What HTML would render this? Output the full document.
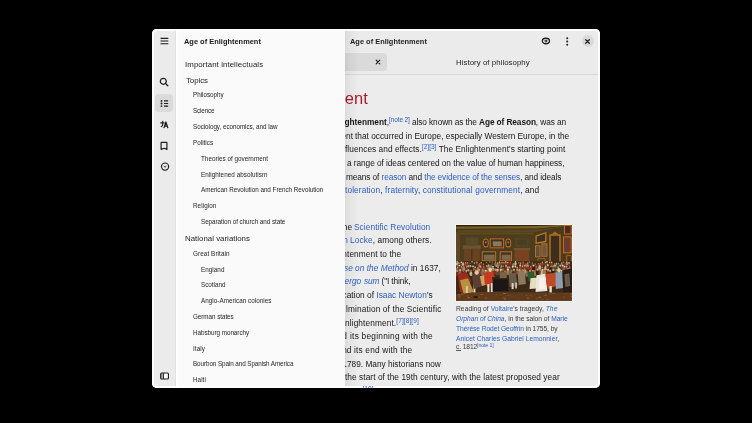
<!DOCTYPE html>
<html><head><meta charset="utf-8"><style>
html,body{margin:0;padding:0;background:#000;width:752px;height:423px;overflow:hidden}
.clip{position:absolute;left:152px;top:29px;width:448px;height:359px;border-radius:5px;overflow:hidden}
.inner{position:absolute;left:-152px;top:-29px;width:752px;height:423px}
.t{position:absolute;white-space:nowrap;line-height:1;font-family:"Liberation Sans", sans-serif;will-change:transform}
.t sup{font-size:0.78em;vertical-align:0;position:relative;top:-0.42em;color:#2d5dbd}
.t a{color:#2d5dbd;text-decoration:none}
.r{position:absolute}
.edge{position:absolute;left:152px;top:29px;width:448px;height:359px;border-radius:5px;box-shadow:inset 0 0 0 2px rgba(255,255,255,0.9);pointer-events:none}
</style></head><body>
<div class="clip"><div class="inner">
<div class="r" style="left:152px;top:29px;width:448px;height:359px;background:#ececec;"></div>
<div class="r" style="left:152px;top:29px;width:448px;height:45px;background:#ebebeb;"></div>
<div class="r" style="left:152px;top:74px;width:448px;height:1px;background:#dadada;"></div>
<div class="t" id="hdr" style="left:349.96px;top:37.84px;font-size:7.400px;color:#1e1e1e;font-weight:bold;letter-spacing:0.025px;">Age of Enlightenment</div>
<div class="r" style="left:300px;top:53.3px;width:87px;height:17.4px;background:#dadada;border-radius:3.5px;"></div>
<svg class="r" style="left:375px;top:59px" width="6" height="6" viewBox="0 0 6 6"><path d="M1.2 1.2L4.8 4.8M4.8 1.2L1.2 4.8" stroke="#1e1e1e" stroke-width="1.2" stroke-linecap="round"/></svg>
<div class="t" id="tab2" style="left:455.94px;top:59.40px;font-size:7.800px;color:#242424;font-weight:normal;letter-spacing:0.065px;">History of philosophy</div>
<svg class="r" style="left:541px;top:37px" width="10" height="8" viewBox="0 0 10 8"><ellipse cx="4.9" cy="4" rx="3.55" ry="2.75" fill="none" stroke="#1e1e1e" stroke-width="1.35"/><circle cx="4.9" cy="4.1" r="1.45" fill="#1e1e1e"/><circle cx="4.75" cy="3.95" r="0.55" fill="#f0f0f0"/></svg>
<svg class="r" style="left:564.5px;top:35.5px" width="4" height="11" viewBox="0 0 4 11"><circle cx="2.2" cy="2.3" r="1" fill="#1e1e1e"/><circle cx="2.2" cy="5.5" r="1" fill="#1e1e1e"/><circle cx="2.2" cy="8.7" r="1" fill="#1e1e1e"/></svg>
<div class="r" style="left:581.5px;top:35px;width:12px;height:12px;background:#d9d9d9;border-radius:50%;"></div>
<svg class="r" style="left:585px;top:38.5px" width="5" height="5" viewBox="0 0 5 5"><path d="M0.7 0.7L4.3 4.3M4.3 0.7L0.7 4.3" stroke="#1e1e1e" stroke-width="1.25" stroke-linecap="round"/></svg>
<div class="t" id="h1" style="right:384.70px;top:89.63px;font-size:16.500px;color:#a51d2a;font-weight:normal;letter-spacing:0px;">Age of Enlightenment</div>
<div class="t" id="a1" style="left:389.00px;top:117.97px;font-size:8.300px;color:#161616;font-weight:normal;letter-spacing:-0.096px;"><sup>[note 2]</sup> also known as the <b>Age of Reason</b>, was an</div>
<div class="t" id="a1p" style="right:363.00px;top:117.97px;font-size:8.300px;color:#161616;font-weight:normal;letter-spacing:0px;"><b>The&nbsp;Age&nbsp;of&nbsp;Enlightenment</b>,</div>
<div class="t" id="a2" style="left:355.00px;top:131.67px;font-size:8.300px;color:#161616;font-weight:normal;letter-spacing:-0.002px;">that occurred in Europe, especially Western Europe, in the</div>
<div class="t" id="a2p" style="right:397.00px;top:131.67px;font-size:8.300px;color:#161616;font-weight:normal;letter-spacing:0px;">philosophical&nbsp;movement&nbsp;</div>
<div class="t" id="a3" style="left:345.00px;top:145.37px;font-size:8.300px;color:#161616;font-weight:normal;letter-spacing:0.041px;">fluences and effects.<sup>[2][3]</sup> The Enlightenment's starting point</div>
<div class="t" id="a3p" style="right:407.00px;top:145.37px;font-size:8.300px;color:#161616;font-weight:normal;letter-spacing:0px;">global&nbsp;in</div>
<div class="t" id="a4" style="left:346.50px;top:159.07px;font-size:8.300px;color:#161616;font-weight:normal;letter-spacing:-0.061px;">a range of ideas centered on the value of human happiness,</div>
<div class="t" id="a4p" style="right:405.50px;top:159.07px;font-size:8.300px;color:#161616;font-weight:normal;letter-spacing:0px;">The&nbsp;Enlightenment&nbsp;included&nbsp;</div>
<div class="t" id="a5" style="left:346.00px;top:172.77px;font-size:8.300px;color:#161616;font-weight:normal;letter-spacing:-0.105px;">means of <a>reason</a> and <a>the evidence of the senses</a>, and ideals</div>
<div class="t" id="a5p" style="right:406.00px;top:172.77px;font-size:8.300px;color:#161616;font-weight:normal;letter-spacing:0px;">knowledge&nbsp;obtained&nbsp;by&nbsp;</div>
<div class="t" id="a6" style="left:345.00px;top:186.47px;font-size:8.300px;color:#161616;font-weight:normal;letter-spacing:0.113px;"><a>toleration</a>, <a>fraternity</a>, <a>constitutional government</a>, and</div>
<div class="t" id="a6p" style="right:407.00px;top:186.47px;font-size:8.300px;color:#161616;font-weight:normal;letter-spacing:0px;">liberty,&nbsp;progress,&nbsp;</div>
<div class="t" id="b1" style="left:354.00px;top:222.67px;font-size:8.300px;color:#161616;font-weight:normal;letter-spacing:0.075px;"><a>Scientific Revolution</a></div>
<div class="t" id="b1p" style="right:398.00px;top:222.67px;font-size:8.300px;color:#161616;font-weight:normal;letter-spacing:0px;">ideas&nbsp;during&nbsp;the&nbsp;</div>
<div class="t" id="b2" style="left:349.96px;top:236.37px;font-size:8.300px;color:#161616;font-weight:normal;letter-spacing:0.098px;"><a>Locke</a>, among others.</div>
<div class="t" id="b2p" style="right:402.04px;top:236.37px;font-size:8.300px;color:#161616;font-weight:normal;letter-spacing:0px;">such&nbsp;as&nbsp;<a>John&nbsp;</a></div>
<div class="t" id="b3" style="left:347.00px;top:250.07px;font-size:8.300px;color:#161616;font-weight:normal;letter-spacing:0.082px;">tenment to the</div>
<div class="t" id="b3p" style="right:405.00px;top:250.07px;font-size:8.300px;color:#161616;font-weight:normal;letter-spacing:0px;">the&nbsp;Enligh</div>
<div class="t" id="b4" style="left:355.00px;top:263.77px;font-size:8.300px;color:#161616;font-weight:normal;letter-spacing:0.043px;"><a><i>on the Method</i></a> in 1637,</div>
<div class="t" id="b4p" style="right:397.00px;top:263.77px;font-size:8.300px;color:#161616;font-weight:normal;letter-spacing:0px;"><a><i>Discourse&nbsp;</i></a></div>
<div class="t" id="b5" style="left:363.96px;top:277.47px;font-size:8.300px;color:#161616;font-weight:normal;letter-spacing:-0.125px;"><a><i>sum</i></a> ("I think,</div>
<div class="t" id="b5p" style="right:388.04px;top:277.47px;font-size:8.300px;color:#161616;font-weight:normal;letter-spacing:0px;"><a><i>Cogito,&nbsp;ergo&nbsp;</i></a></div>
<div class="t" id="b6" style="left:367.00px;top:291.17px;font-size:8.300px;color:#161616;font-weight:normal;letter-spacing:0.027px;">of <a>Isaac Newton</a>'s</div>
<div class="t" id="b6p" style="right:385.00px;top:291.17px;font-size:8.300px;color:#161616;font-weight:normal;letter-spacing:0px;">publication&nbsp;</div>
<div class="t" id="b7" style="left:346.00px;top:304.87px;font-size:8.300px;color:#161616;font-weight:normal;letter-spacing:0.135px;">lmination of the Scientific</div>
<div class="t" id="b7p" style="right:406.00px;top:304.87px;font-size:8.300px;color:#161616;font-weight:normal;letter-spacing:0px;">as&nbsp;the&nbsp;cu</div>
<div class="t" id="b8" style="left:345.00px;top:318.57px;font-size:8.300px;color:#161616;font-weight:normal;letter-spacing:0.111px;">nlightenment.<sup>[7][8][9]</sup></div>
<div class="t" id="b8p" style="right:407.00px;top:318.57px;font-size:8.300px;color:#161616;font-weight:normal;letter-spacing:0px;">the&nbsp;E</div>
<div class="t" id="b9" style="left:349.50px;top:332.27px;font-size:8.300px;color:#161616;font-weight:normal;letter-spacing:0.25px;">its beginning with the</div>
<div class="t" id="b9p" style="right:402.50px;top:332.27px;font-size:8.300px;color:#161616;font-weight:normal;letter-spacing:0px;">usually&nbsp;dated&nbsp;</div>
<div class="t" id="b10" style="left:353.96px;top:345.97px;font-size:8.300px;color:#161616;font-weight:normal;letter-spacing:0.185px;">its end with the</div>
<div class="t" id="b10p" style="right:398.04px;top:345.97px;font-size:8.300px;color:#161616;font-weight:normal;letter-spacing:0px;">in&nbsp;1715&nbsp;and&nbsp;</div>
<div class="t" id="b11" style="left:346.50px;top:359.67px;font-size:8.300px;color:#161616;font-weight:normal;letter-spacing:-0.011px;">789. Many historians now</div>
<div class="t" id="b11p" style="right:405.50px;top:359.67px;font-size:8.300px;color:#161616;font-weight:normal;letter-spacing:0px;">Revolution&nbsp;in&nbsp;1</div>
<div class="t" id="b12" style="left:345.00px;top:373.37px;font-size:8.300px;color:#161616;font-weight:normal;letter-spacing:0.061px;">the start of the 19th century, with the latest proposed year</div>
<div class="t" id="b12p" style="right:407.00px;top:373.37px;font-size:8.300px;color:#161616;font-weight:normal;letter-spacing:0px;">Enlightenment&nbsp;as&nbsp;</div>
<svg class="r" style="left:455px;top:223.5px" width="118" height="78" viewBox="-1 -1 118 78"><rect x="-1" y="-1" width="118" height="78" fill="#f5f5f5"/><defs><linearGradient id="pg" x1="0" y1="0" x2="0" y2="1"><stop offset="0" stop-color="#3a2a10"/><stop offset="0.13" stop-color="#5a4820"/><stop offset="0.5" stop-color="#5a4a26"/><stop offset="0.55" stop-color="#4a3418"/><stop offset="1" stop-color="#5a3a1c"/></linearGradient><filter id="bl"><feGaussianBlur stdDeviation="0.3"/></filter><clipPath id="pc"><rect x="0" y="0" width="116" height="76"/></clipPath></defs><g clip-path="url(#pc)"><g filter="url(#bl)"><rect x="-0.02" y="-0.52" width="116.10" height="76.34" fill="url(#pg)" /><rect x="-0.02" y="-0.52" width="116.10" height="3.98" fill="#2e220e" /><polygon points="-0.02,1.46 79.50,1.07 116.08,-0.52 116.08,0.67 81.49,3.45 -0.02,3.85" fill="#7a6028" /><polygon points="1.96,5.04 77.51,4.65 107.33,1.46 107.33,2.66 79.50,7.03 1.96,7.43" fill="#5a4620" /><rect x="3.95" y="7.83" width="71.57" height="1.59" fill="#5e4a24" /><polygon points="75.52,9.42 116.08,3.45 116.08,5.44 77.51,11.40" fill="#6a5024" /><rect x="3.95" y="9.42" width="73.56" height="29.82" fill="#4e3e1e" /><rect x="7.93" y="23.33" width="15.90" height="15.90" fill="#6a4220" /><rect x="15.48" y="23.33" width="0.80" height="15.90" fill="#3a2a14" /><rect x="6.93" y="20.35" width="17.89" height="3.38" fill="#6a5630" /><rect x="9.92" y="12.40" width="11.93" height="7.95" fill="#584a2c" /><ellipse cx="29.80" cy="17.97" rx="2.98" ry="4.57" fill="#c07028" /><ellipse cx="29.80" cy="17.97" rx="1.99" ry="3.38" fill="#3a2a1c" /><ellipse cx="29.80" cy="17.37" rx="0.80" ry="1.19" fill="#a08060" /><rect x="33.77" y="13.39" width="14.31" height="9.94" fill="#c46a28" /><rect x="34.77" y="14.39" width="12.33" height="7.95" fill="#3a3020" /><rect x="36.76" y="16.37" width="8.95" height="4.97" fill="#8a7a5a" /><ellipse cx="52.26" cy="17.97" rx="2.98" ry="4.57" fill="#c07028" /><ellipse cx="52.26" cy="17.97" rx="1.99" ry="3.38" fill="#3a2a1c" /><ellipse cx="52.26" cy="17.37" rx="0.80" ry="1.19" fill="#a08060" /><rect x="59.62" y="13.39" width="12.92" height="7.95" fill="#5a4a2a" /><rect x="60.61" y="14.39" width="10.93" height="5.96" fill="#4a3c24" /><rect x="25.82" y="26.32" width="14.31" height="9.94" fill="#c46a28" /><rect x="26.82" y="27.31" width="12.33" height="7.95" fill="#3a3424" /><rect x="27.81" y="29.69" width="10.93" height="5.17" fill="#7a6a48" /><rect x="43.71" y="26.32" width="12.33" height="9.94" fill="#c46a28" /><rect x="44.71" y="27.31" width="10.34" height="7.95" fill="#3a3424" /><rect x="45.70" y="29.69" width="8.95" height="5.17" fill="#7a6a48" /><rect x="58.62" y="24.33" width="14.51" height="14.91" fill="#7a4222" /><rect x="57.63" y="22.94" width="16.30" height="2.39" fill="#6a5430" /><polygon points="77.51,7.43 116.08,-0.13 116.08,39.24 77.51,39.64" fill="#4a3a1c" /><polygon points="79.50,10.41 90.43,7.03 90.43,16.97 79.50,18.96" fill="#c8782a" /><polygon points="80.69,11.40 89.24,8.62 89.24,15.78 80.69,17.57" fill="#3e3220" /><rect x="79.10" y="20.35" width="5.37" height="11.93" fill="#c8782a" /><rect x="79.90" y="21.15" width="3.78" height="10.34" fill="#5e5040" /><rect x="85.46" y="18.36" width="5.96" height="13.32" fill="#c8782a" /><rect x="86.26" y="19.16" width="4.37" height="11.73" fill="#6a5a44" /><rect x="93.42" y="9.42" width="11.13" height="30.22" fill="#d07c26" /><rect x="94.61" y="10.61" width="8.75" height="27.83" fill="#3a2e1c" /><polygon points="95.40,9.42 98.98,6.43 102.56,9.42" fill="#b06a24" /><rect x="107.93" y="-0.13" width="7.75" height="9.54" fill="#c8701e" /><rect x="108.92" y="0.87" width="5.77" height="7.55" fill="#4a2a20" /><rect x="106.93" y="11.40" width="8.75" height="16.90" fill="#c8701e" /><rect x="107.93" y="12.40" width="6.76" height="14.91" fill="#6a3a2e" /><rect x="110.31" y="30.29" width="5.37" height="9.34" fill="#c07020" /><rect x="111.11" y="31.09" width="3.78" height="7.75" fill="#4a3424" /><rect x="81.49" y="33.27" width="7.95" height="6.36" fill="#b06a24" /><rect x="82.28" y="34.07" width="6.36" height="4.77" fill="#4a3a28" /><rect x="-0.02" y="36.26" width="116.10" height="33.80" fill="#3c2a18" /><ellipse cx="1.16" cy="39.00" rx="1.25" ry="1.79" fill="#c8b890" /><ellipse cx="1.16" cy="37.21" rx="0.72" ry="0.85" fill="#b89068" /><ellipse cx="1.16" cy="36.72" rx="0.76" ry="0.49" fill="#e4dccc" /><ellipse cx="2.92" cy="40.03" rx="1.25" ry="1.79" fill="#7a3420" /><ellipse cx="2.92" cy="38.24" rx="0.72" ry="0.85" fill="#c09a72" /><ellipse cx="2.92" cy="37.75" rx="0.76" ry="0.49" fill="#bdb2a0" /><ellipse cx="5.26" cy="39.22" rx="1.25" ry="1.79" fill="#7a3420" /><ellipse cx="5.26" cy="37.43" rx="0.72" ry="0.85" fill="#c8a880" /><ellipse cx="5.26" cy="36.93" rx="0.76" ry="0.49" fill="#e4dccc" /><ellipse cx="7.07" cy="39.17" rx="1.25" ry="1.79" fill="#c8b890" /><ellipse cx="7.07" cy="37.38" rx="0.72" ry="0.85" fill="#987048" /><ellipse cx="9.69" cy="39.59" rx="1.25" ry="1.79" fill="#a83a22" /><ellipse cx="9.69" cy="37.80" rx="0.72" ry="0.85" fill="#b89068" /><ellipse cx="11.52" cy="39.64" rx="1.25" ry="1.79" fill="#7a3420" /><ellipse cx="11.52" cy="37.85" rx="0.72" ry="0.85" fill="#b89068" /><ellipse cx="14.11" cy="40.27" rx="1.25" ry="1.79" fill="#3a2a18" /><ellipse cx="14.11" cy="38.48" rx="0.72" ry="0.85" fill="#987048" /><ellipse cx="16.04" cy="38.87" rx="1.25" ry="1.79" fill="#3a2a18" /><ellipse cx="16.04" cy="37.08" rx="0.72" ry="0.85" fill="#987048" /><ellipse cx="16.04" cy="36.59" rx="0.76" ry="0.49" fill="#d8d0c0" /><ellipse cx="18.52" cy="39.91" rx="1.25" ry="1.79" fill="#2e3a26" /><ellipse cx="18.52" cy="38.12" rx="0.72" ry="0.85" fill="#c8a880" /><ellipse cx="20.92" cy="39.36" rx="1.25" ry="1.79" fill="#8a2a1a" /><ellipse cx="20.92" cy="37.57" rx="0.72" ry="0.85" fill="#c09a72" /><ellipse cx="20.92" cy="37.07" rx="0.76" ry="0.49" fill="#bdb2a0" /><ellipse cx="23.45" cy="40.73" rx="1.25" ry="1.79" fill="#a07a40" /><ellipse cx="23.45" cy="38.94" rx="0.72" ry="0.85" fill="#a07850" /><ellipse cx="25.17" cy="39.86" rx="1.25" ry="1.79" fill="#8a2a1a" /><ellipse cx="25.17" cy="38.07" rx="0.72" ry="0.85" fill="#a07850" /><ellipse cx="25.17" cy="37.58" rx="0.76" ry="0.49" fill="#bdb2a0" /><ellipse cx="27.52" cy="40.94" rx="1.25" ry="1.79" fill="#3a2a18" /><ellipse cx="27.52" cy="39.15" rx="0.72" ry="0.85" fill="#987048" /><ellipse cx="30.67" cy="39.39" rx="1.25" ry="1.79" fill="#2e3a26" /><ellipse cx="30.67" cy="37.60" rx="0.72" ry="0.85" fill="#987048" /><ellipse cx="33.69" cy="38.81" rx="1.25" ry="1.79" fill="#3a2a18" /><ellipse cx="33.69" cy="37.02" rx="0.72" ry="0.85" fill="#a07850" /><ellipse cx="36.47" cy="38.79" rx="1.25" ry="1.79" fill="#5a4a30" /><ellipse cx="36.47" cy="37.00" rx="0.72" ry="0.85" fill="#987048" /><ellipse cx="39.53" cy="39.32" rx="1.25" ry="1.79" fill="#7a6a54" /><ellipse cx="39.53" cy="37.53" rx="0.72" ry="0.85" fill="#a07850" /><ellipse cx="39.53" cy="37.04" rx="0.76" ry="0.49" fill="#bdb2a0" /><ellipse cx="41.75" cy="40.10" rx="1.25" ry="1.79" fill="#a07a40" /><ellipse cx="41.75" cy="38.31" rx="0.72" ry="0.85" fill="#b89068" /><ellipse cx="41.75" cy="37.82" rx="0.76" ry="0.49" fill="#bdb2a0" /><ellipse cx="43.58" cy="39.23" rx="1.25" ry="1.79" fill="#7a6a54" /><ellipse cx="43.58" cy="37.44" rx="0.72" ry="0.85" fill="#c8a880" /><ellipse cx="43.58" cy="36.95" rx="0.76" ry="0.49" fill="#bdb2a0" /><ellipse cx="45.89" cy="39.30" rx="1.25" ry="1.79" fill="#8a2a1a" /><ellipse cx="45.89" cy="37.51" rx="0.72" ry="0.85" fill="#c8a880" /><ellipse cx="47.97" cy="39.63" rx="1.25" ry="1.79" fill="#2e3a26" /><ellipse cx="47.97" cy="37.84" rx="0.72" ry="0.85" fill="#c8a880" /><ellipse cx="49.83" cy="39.06" rx="1.25" ry="1.79" fill="#a83a22" /><ellipse cx="49.83" cy="37.27" rx="0.72" ry="0.85" fill="#c09a72" /><ellipse cx="49.83" cy="36.78" rx="0.76" ry="0.49" fill="#e4dccc" /><ellipse cx="51.75" cy="39.31" rx="1.25" ry="1.79" fill="#8a2a1a" /><ellipse cx="51.75" cy="37.52" rx="0.72" ry="0.85" fill="#c8a880" /><ellipse cx="54.43" cy="39.40" rx="1.25" ry="1.79" fill="#8a2a1a" /><ellipse cx="54.43" cy="37.61" rx="0.72" ry="0.85" fill="#987048" /><ellipse cx="57.20" cy="40.41" rx="1.25" ry="1.79" fill="#a07a40" /><ellipse cx="57.20" cy="38.62" rx="0.72" ry="0.85" fill="#987048" /><ellipse cx="59.50" cy="38.89" rx="1.25" ry="1.79" fill="#c8b890" /><ellipse cx="59.50" cy="37.10" rx="0.72" ry="0.85" fill="#c8a880" /><ellipse cx="59.50" cy="36.61" rx="0.76" ry="0.49" fill="#d8d0c0" /><ellipse cx="62.85" cy="39.69" rx="1.25" ry="1.79" fill="#3a2a18" /><ellipse cx="62.85" cy="37.90" rx="0.72" ry="0.85" fill="#a07850" /><ellipse cx="64.63" cy="39.99" rx="1.25" ry="1.79" fill="#7a3420" /><ellipse cx="64.63" cy="38.20" rx="0.72" ry="0.85" fill="#b89068" /><ellipse cx="67.31" cy="38.81" rx="1.25" ry="1.79" fill="#a83a22" /><ellipse cx="67.31" cy="37.02" rx="0.72" ry="0.85" fill="#987048" /><ellipse cx="70.04" cy="40.92" rx="1.25" ry="1.79" fill="#9a9080" /><ellipse cx="70.04" cy="39.13" rx="0.72" ry="0.85" fill="#a07850" /><ellipse cx="71.84" cy="39.81" rx="1.25" ry="1.79" fill="#a07a40" /><ellipse cx="71.84" cy="38.02" rx="0.72" ry="0.85" fill="#c8a880" /><ellipse cx="73.58" cy="38.88" rx="1.25" ry="1.79" fill="#2e3a26" /><ellipse cx="73.58" cy="37.10" rx="0.72" ry="0.85" fill="#a07850" /><ellipse cx="76.41" cy="39.87" rx="1.25" ry="1.79" fill="#a83a22" /><ellipse cx="76.41" cy="38.08" rx="0.72" ry="0.85" fill="#987048" /><ellipse cx="79.23" cy="40.82" rx="1.25" ry="1.79" fill="#7a3420" /><ellipse cx="79.23" cy="39.03" rx="0.72" ry="0.85" fill="#a07850" /><ellipse cx="82.37" cy="40.30" rx="1.25" ry="1.79" fill="#5a4a30" /><ellipse cx="82.37" cy="38.51" rx="0.72" ry="0.85" fill="#987048" /><ellipse cx="84.26" cy="40.48" rx="1.25" ry="1.79" fill="#7a3420" /><ellipse cx="84.26" cy="38.69" rx="0.72" ry="0.85" fill="#987048" /><ellipse cx="86.44" cy="39.17" rx="1.25" ry="1.79" fill="#a83a22" /><ellipse cx="86.44" cy="37.38" rx="0.72" ry="0.85" fill="#c09a72" /><ellipse cx="89.35" cy="39.18" rx="1.25" ry="1.79" fill="#7a3420" /><ellipse cx="89.35" cy="37.39" rx="0.72" ry="0.85" fill="#c8a880" /><ellipse cx="91.00" cy="38.71" rx="1.25" ry="1.79" fill="#5a4a30" /><ellipse cx="91.00" cy="36.92" rx="0.72" ry="0.85" fill="#c8a880" /><ellipse cx="91.00" cy="36.43" rx="0.76" ry="0.49" fill="#e4dccc" /><ellipse cx="93.67" cy="39.46" rx="1.25" ry="1.79" fill="#2e3a26" /><ellipse cx="93.67" cy="37.67" rx="0.72" ry="0.85" fill="#a07850" /><ellipse cx="93.67" cy="37.18" rx="0.76" ry="0.49" fill="#d8d0c0" /><ellipse cx="95.67" cy="39.11" rx="1.25" ry="1.79" fill="#a83a22" /><ellipse cx="95.67" cy="37.32" rx="0.72" ry="0.85" fill="#c8a880" /><ellipse cx="98.87" cy="40.65" rx="1.25" ry="1.79" fill="#a07a40" /><ellipse cx="98.87" cy="38.86" rx="0.72" ry="0.85" fill="#a07850" /><ellipse cx="100.61" cy="40.22" rx="1.25" ry="1.79" fill="#7a6a54" /><ellipse cx="100.61" cy="38.43" rx="0.72" ry="0.85" fill="#c09a72" /><ellipse cx="102.52" cy="40.52" rx="1.25" ry="1.79" fill="#2e3a26" /><ellipse cx="102.52" cy="38.73" rx="0.72" ry="0.85" fill="#b89068" /><ellipse cx="105.85" cy="39.59" rx="1.25" ry="1.79" fill="#7a6a54" /><ellipse cx="105.85" cy="37.80" rx="0.72" ry="0.85" fill="#b89068" /><ellipse cx="107.74" cy="38.94" rx="1.25" ry="1.79" fill="#8a2a1a" /><ellipse cx="107.74" cy="37.15" rx="0.72" ry="0.85" fill="#987048" /><ellipse cx="110.78" cy="38.99" rx="1.25" ry="1.79" fill="#9a9080" /><ellipse cx="110.78" cy="37.20" rx="0.72" ry="0.85" fill="#c8a880" /><ellipse cx="112.99" cy="39.95" rx="1.25" ry="1.79" fill="#8a2a1a" /><ellipse cx="112.99" cy="38.16" rx="0.72" ry="0.85" fill="#b89068" /><ellipse cx="112.99" cy="37.67" rx="0.76" ry="0.49" fill="#e4dccc" /><ellipse cx="1.40" cy="44.84" rx="1.53" ry="2.19" fill="#7a6a54" /><ellipse cx="1.40" cy="42.66" rx="0.87" ry="1.04" fill="#c09a72" /><ellipse cx="3.37" cy="43.22" rx="1.53" ry="2.19" fill="#5a4a30" /><ellipse cx="3.37" cy="41.03" rx="0.87" ry="1.04" fill="#987048" /><ellipse cx="3.37" cy="40.43" rx="0.93" ry="0.60" fill="#e4dccc" /><ellipse cx="5.54" cy="43.92" rx="1.53" ry="2.19" fill="#8a2a1a" /><ellipse cx="5.54" cy="41.73" rx="0.87" ry="1.04" fill="#b89068" /><ellipse cx="7.76" cy="43.71" rx="1.53" ry="2.19" fill="#9a9080" /><ellipse cx="7.76" cy="41.52" rx="0.87" ry="1.04" fill="#987048" /><ellipse cx="11.00" cy="43.81" rx="1.53" ry="2.19" fill="#7a3420" /><ellipse cx="11.00" cy="41.63" rx="0.87" ry="1.04" fill="#c09a72" /><ellipse cx="12.62" cy="43.67" rx="1.53" ry="2.19" fill="#8a2a1a" /><ellipse cx="12.62" cy="41.48" rx="0.87" ry="1.04" fill="#987048" /><ellipse cx="12.62" cy="40.88" rx="0.93" ry="0.60" fill="#d8d0c0" /><ellipse cx="14.52" cy="43.75" rx="1.53" ry="2.19" fill="#3a2a18" /><ellipse cx="14.52" cy="41.56" rx="0.87" ry="1.04" fill="#987048" /><ellipse cx="14.52" cy="40.96" rx="0.93" ry="0.60" fill="#e4dccc" /><ellipse cx="17.04" cy="43.94" rx="1.53" ry="2.19" fill="#3a2a18" /><ellipse cx="17.04" cy="41.76" rx="0.87" ry="1.04" fill="#987048" /><ellipse cx="17.04" cy="41.15" rx="0.93" ry="0.60" fill="#d8d0c0" /><ellipse cx="19.12" cy="44.46" rx="1.53" ry="2.19" fill="#7a3420" /><ellipse cx="19.12" cy="42.27" rx="0.87" ry="1.04" fill="#c8a880" /><ellipse cx="22.07" cy="44.79" rx="1.53" ry="2.19" fill="#a07a40" /><ellipse cx="22.07" cy="42.61" rx="0.87" ry="1.04" fill="#a07850" /><ellipse cx="24.57" cy="43.84" rx="1.53" ry="2.19" fill="#5a4a30" /><ellipse cx="24.57" cy="41.65" rx="0.87" ry="1.04" fill="#c8a880" /><ellipse cx="27.60" cy="43.83" rx="1.53" ry="2.19" fill="#a83a22" /><ellipse cx="27.60" cy="41.64" rx="0.87" ry="1.04" fill="#987048" /><ellipse cx="30.88" cy="43.24" rx="1.53" ry="2.19" fill="#7a3420" /><ellipse cx="30.88" cy="41.05" rx="0.87" ry="1.04" fill="#c09a72" /><ellipse cx="32.72" cy="42.91" rx="1.53" ry="2.19" fill="#a07a40" /><ellipse cx="32.72" cy="40.72" rx="0.87" ry="1.04" fill="#a07850" /><ellipse cx="32.72" cy="40.12" rx="0.93" ry="0.60" fill="#d8d0c0" /><ellipse cx="35.07" cy="43.12" rx="1.53" ry="2.19" fill="#5a4a30" /><ellipse cx="35.07" cy="40.94" rx="0.87" ry="1.04" fill="#b89068" /><ellipse cx="36.94" cy="44.33" rx="1.53" ry="2.19" fill="#c8b890" /><ellipse cx="36.94" cy="42.14" rx="0.87" ry="1.04" fill="#a07850" /><ellipse cx="36.94" cy="41.54" rx="0.93" ry="0.60" fill="#d8d0c0" /><ellipse cx="40.26" cy="43.14" rx="1.53" ry="2.19" fill="#3a2a18" /><ellipse cx="40.26" cy="40.95" rx="0.87" ry="1.04" fill="#c8a880" /><ellipse cx="42.14" cy="44.21" rx="1.53" ry="2.19" fill="#a83a22" /><ellipse cx="42.14" cy="42.02" rx="0.87" ry="1.04" fill="#c09a72" /><ellipse cx="45.51" cy="43.58" rx="1.53" ry="2.19" fill="#7a6a54" /><ellipse cx="45.51" cy="41.39" rx="0.87" ry="1.04" fill="#c09a72" /><ellipse cx="47.27" cy="43.49" rx="1.53" ry="2.19" fill="#2e3a26" /><ellipse cx="47.27" cy="41.30" rx="0.87" ry="1.04" fill="#987048" /><ellipse cx="50.12" cy="43.53" rx="1.53" ry="2.19" fill="#7a3420" /><ellipse cx="50.12" cy="41.35" rx="0.87" ry="1.04" fill="#987048" /><ellipse cx="50.12" cy="40.75" rx="0.93" ry="0.60" fill="#d8d0c0" /><ellipse cx="51.91" cy="44.81" rx="1.53" ry="2.19" fill="#a83a22" /><ellipse cx="51.91" cy="42.62" rx="0.87" ry="1.04" fill="#b89068" /><ellipse cx="51.91" cy="42.02" rx="0.93" ry="0.60" fill="#bdb2a0" /><ellipse cx="53.57" cy="44.48" rx="1.53" ry="2.19" fill="#5a4a30" /><ellipse cx="53.57" cy="42.29" rx="0.87" ry="1.04" fill="#c09a72" /><ellipse cx="56.68" cy="44.23" rx="1.53" ry="2.19" fill="#5a4a30" /><ellipse cx="56.68" cy="42.04" rx="0.87" ry="1.04" fill="#c8a880" /><ellipse cx="56.68" cy="41.44" rx="0.93" ry="0.60" fill="#e4dccc" /><ellipse cx="59.29" cy="44.29" rx="1.53" ry="2.19" fill="#3a2a18" /><ellipse cx="59.29" cy="42.10" rx="0.87" ry="1.04" fill="#a07850" /><ellipse cx="59.29" cy="41.50" rx="0.93" ry="0.60" fill="#e4dccc" /><ellipse cx="61.21" cy="44.75" rx="1.53" ry="2.19" fill="#5a4a30" /><ellipse cx="61.21" cy="42.57" rx="0.87" ry="1.04" fill="#b89068" /><ellipse cx="64.24" cy="42.82" rx="1.53" ry="2.19" fill="#a83a22" /><ellipse cx="64.24" cy="40.63" rx="0.87" ry="1.04" fill="#b89068" /><ellipse cx="64.24" cy="40.03" rx="0.93" ry="0.60" fill="#d8d0c0" /><ellipse cx="66.64" cy="43.43" rx="1.53" ry="2.19" fill="#7a3420" /><ellipse cx="66.64" cy="41.24" rx="0.87" ry="1.04" fill="#c8a880" /><ellipse cx="68.71" cy="42.93" rx="1.53" ry="2.19" fill="#7a3420" /><ellipse cx="68.71" cy="40.74" rx="0.87" ry="1.04" fill="#c09a72" /><ellipse cx="72.03" cy="43.24" rx="1.53" ry="2.19" fill="#8a2a1a" /><ellipse cx="72.03" cy="41.06" rx="0.87" ry="1.04" fill="#c09a72" /><ellipse cx="74.75" cy="43.88" rx="1.53" ry="2.19" fill="#a83a22" /><ellipse cx="74.75" cy="41.70" rx="0.87" ry="1.04" fill="#a07850" /><ellipse cx="77.54" cy="43.26" rx="1.53" ry="2.19" fill="#2a1e14" /><ellipse cx="77.54" cy="41.08" rx="0.87" ry="1.04" fill="#a07850" /><ellipse cx="77.54" cy="40.47" rx="0.93" ry="0.60" fill="#d8d0c0" /><ellipse cx="80.44" cy="43.93" rx="1.53" ry="2.19" fill="#a83a22" /><ellipse cx="80.44" cy="41.75" rx="0.87" ry="1.04" fill="#987048" /><ellipse cx="83.71" cy="42.87" rx="1.53" ry="2.19" fill="#c8b890" /><ellipse cx="83.71" cy="40.68" rx="0.87" ry="1.04" fill="#c8a880" /><ellipse cx="86.27" cy="44.74" rx="1.53" ry="2.19" fill="#7a3420" /><ellipse cx="86.27" cy="42.55" rx="0.87" ry="1.04" fill="#a07850" /><ellipse cx="89.62" cy="43.43" rx="1.53" ry="2.19" fill="#c8b890" /><ellipse cx="89.62" cy="41.25" rx="0.87" ry="1.04" fill="#c09a72" /><ellipse cx="91.83" cy="42.75" rx="1.53" ry="2.19" fill="#8a2a1a" /><ellipse cx="91.83" cy="40.56" rx="0.87" ry="1.04" fill="#b89068" /><ellipse cx="91.83" cy="39.96" rx="0.93" ry="0.60" fill="#e4dccc" /><ellipse cx="95.00" cy="43.64" rx="1.53" ry="2.19" fill="#2a1e14" /><ellipse cx="95.00" cy="41.46" rx="0.87" ry="1.04" fill="#b89068" /><ellipse cx="97.27" cy="43.82" rx="1.53" ry="2.19" fill="#5a4a30" /><ellipse cx="97.27" cy="41.64" rx="0.87" ry="1.04" fill="#987048" /><ellipse cx="97.27" cy="41.04" rx="0.93" ry="0.60" fill="#bdb2a0" /><ellipse cx="98.94" cy="43.06" rx="1.53" ry="2.19" fill="#5a4a30" /><ellipse cx="98.94" cy="40.87" rx="0.87" ry="1.04" fill="#c8a880" /><ellipse cx="98.94" cy="40.27" rx="0.93" ry="0.60" fill="#bdb2a0" /><ellipse cx="102.25" cy="44.94" rx="1.53" ry="2.19" fill="#7a3420" /><ellipse cx="102.25" cy="42.75" rx="0.87" ry="1.04" fill="#a07850" /><ellipse cx="102.25" cy="42.15" rx="0.93" ry="0.60" fill="#bdb2a0" /><ellipse cx="104.23" cy="43.05" rx="1.53" ry="2.19" fill="#2e3a26" /><ellipse cx="104.23" cy="40.87" rx="0.87" ry="1.04" fill="#c8a880" /><ellipse cx="104.23" cy="40.27" rx="0.93" ry="0.60" fill="#bdb2a0" /><ellipse cx="106.72" cy="43.10" rx="1.53" ry="2.19" fill="#7a3420" /><ellipse cx="106.72" cy="40.91" rx="0.87" ry="1.04" fill="#b89068" /><ellipse cx="106.72" cy="40.31" rx="0.93" ry="0.60" fill="#d8d0c0" /><ellipse cx="108.57" cy="44.02" rx="1.53" ry="2.19" fill="#7a6a54" /><ellipse cx="108.57" cy="41.83" rx="0.87" ry="1.04" fill="#b89068" /><ellipse cx="108.57" cy="41.23" rx="0.93" ry="0.60" fill="#e4dccc" /><ellipse cx="110.58" cy="44.01" rx="1.53" ry="2.19" fill="#7a3420" /><ellipse cx="110.58" cy="41.83" rx="0.87" ry="1.04" fill="#c09a72" /><ellipse cx="113.45" cy="44.71" rx="1.53" ry="2.19" fill="#7a6a54" /><ellipse cx="113.45" cy="42.53" rx="0.87" ry="1.04" fill="#a07850" /><ellipse cx="1.11" cy="48.47" rx="1.81" ry="2.58" fill="#8a2a1a" /><ellipse cx="1.11" cy="45.88" rx="1.03" ry="1.23" fill="#b89068" /><ellipse cx="4.18" cy="48.21" rx="1.81" ry="2.58" fill="#7a6a54" /><ellipse cx="4.18" cy="45.63" rx="1.03" ry="1.23" fill="#987048" /><ellipse cx="4.18" cy="44.92" rx="1.10" ry="0.71" fill="#e4dccc" /><ellipse cx="7.32" cy="48.35" rx="1.81" ry="2.58" fill="#2a1e14" /><ellipse cx="7.32" cy="45.76" rx="1.03" ry="1.23" fill="#987048" /><ellipse cx="10.38" cy="49.27" rx="1.81" ry="2.58" fill="#c8b890" /><ellipse cx="10.38" cy="46.69" rx="1.03" ry="1.23" fill="#c09a72" /><ellipse cx="10.38" cy="45.98" rx="1.10" ry="0.71" fill="#d8d0c0" /><ellipse cx="12.40" cy="47.85" rx="1.81" ry="2.58" fill="#3a2a18" /><ellipse cx="12.40" cy="45.27" rx="1.03" ry="1.23" fill="#c8a880" /><ellipse cx="15.19" cy="48.49" rx="1.81" ry="2.58" fill="#c8b890" /><ellipse cx="15.19" cy="45.90" rx="1.03" ry="1.23" fill="#987048" /><ellipse cx="17.86" cy="47.00" rx="1.81" ry="2.58" fill="#3a2a18" /><ellipse cx="17.86" cy="44.41" rx="1.03" ry="1.23" fill="#987048" /><ellipse cx="19.81" cy="48.25" rx="1.81" ry="2.58" fill="#a07a40" /><ellipse cx="19.81" cy="45.66" rx="1.03" ry="1.23" fill="#a07850" /><ellipse cx="23.11" cy="47.55" rx="1.81" ry="2.58" fill="#a83a22" /><ellipse cx="23.11" cy="44.97" rx="1.03" ry="1.23" fill="#c09a72" /><ellipse cx="26.65" cy="48.17" rx="1.81" ry="2.58" fill="#7a6a54" /><ellipse cx="26.65" cy="45.58" rx="1.03" ry="1.23" fill="#b89068" /><ellipse cx="29.66" cy="48.82" rx="1.81" ry="2.58" fill="#9a9080" /><ellipse cx="29.66" cy="46.24" rx="1.03" ry="1.23" fill="#c09a72" /><ellipse cx="29.66" cy="45.53" rx="1.10" ry="0.71" fill="#d8d0c0" /><ellipse cx="32.05" cy="48.55" rx="1.81" ry="2.58" fill="#5a4a30" /><ellipse cx="32.05" cy="45.96" rx="1.03" ry="1.23" fill="#987048" /><ellipse cx="33.86" cy="47.14" rx="1.81" ry="2.58" fill="#5a4a30" /><ellipse cx="33.86" cy="44.55" rx="1.03" ry="1.23" fill="#b89068" /><ellipse cx="36.86" cy="47.68" rx="1.81" ry="2.58" fill="#7a3420" /><ellipse cx="36.86" cy="45.10" rx="1.03" ry="1.23" fill="#a07850" /><ellipse cx="39.48" cy="47.27" rx="1.81" ry="2.58" fill="#7a3420" /><ellipse cx="39.48" cy="44.69" rx="1.03" ry="1.23" fill="#c09a72" /><ellipse cx="41.42" cy="48.12" rx="1.81" ry="2.58" fill="#5a4a30" /><ellipse cx="41.42" cy="45.53" rx="1.03" ry="1.23" fill="#c8a880" /><ellipse cx="41.42" cy="44.82" rx="1.10" ry="0.71" fill="#e4dccc" /><ellipse cx="44.94" cy="48.06" rx="1.81" ry="2.58" fill="#5a4a30" /><ellipse cx="44.94" cy="45.48" rx="1.03" ry="1.23" fill="#c8a880" /><ellipse cx="44.94" cy="44.77" rx="1.10" ry="0.71" fill="#d8d0c0" /><ellipse cx="46.87" cy="47.21" rx="1.81" ry="2.58" fill="#7a3420" /><ellipse cx="46.87" cy="44.62" rx="1.03" ry="1.23" fill="#a07850" /><ellipse cx="48.89" cy="48.95" rx="1.81" ry="2.58" fill="#7a3420" /><ellipse cx="48.89" cy="46.36" rx="1.03" ry="1.23" fill="#a07850" /><ellipse cx="51.94" cy="47.54" rx="1.81" ry="2.58" fill="#a07a40" /><ellipse cx="51.94" cy="44.96" rx="1.03" ry="1.23" fill="#c8a880" /><ellipse cx="51.94" cy="44.25" rx="1.10" ry="0.71" fill="#d8d0c0" /><ellipse cx="55.43" cy="48.62" rx="1.81" ry="2.58" fill="#7a6a54" /><ellipse cx="55.43" cy="46.03" rx="1.03" ry="1.23" fill="#a07850" /><ellipse cx="57.96" cy="47.89" rx="1.81" ry="2.58" fill="#3a2a18" /><ellipse cx="57.96" cy="45.30" rx="1.03" ry="1.23" fill="#a07850" /><ellipse cx="57.96" cy="44.59" rx="1.10" ry="0.71" fill="#bdb2a0" /><ellipse cx="61.25" cy="47.28" rx="1.81" ry="2.58" fill="#a83a22" /><ellipse cx="61.25" cy="44.69" rx="1.03" ry="1.23" fill="#b89068" /><ellipse cx="63.56" cy="47.88" rx="1.81" ry="2.58" fill="#7a6a54" /><ellipse cx="63.56" cy="45.29" rx="1.03" ry="1.23" fill="#c8a880" /><ellipse cx="66.41" cy="47.85" rx="1.81" ry="2.58" fill="#7a6a54" /><ellipse cx="66.41" cy="45.27" rx="1.03" ry="1.23" fill="#a07850" /><ellipse cx="68.70" cy="47.11" rx="1.81" ry="2.58" fill="#c8b890" /><ellipse cx="68.70" cy="44.53" rx="1.03" ry="1.23" fill="#a07850" /><ellipse cx="70.75" cy="49.31" rx="1.81" ry="2.58" fill="#7a6a54" /><ellipse cx="70.75" cy="46.72" rx="1.03" ry="1.23" fill="#987048" /><ellipse cx="73.92" cy="48.86" rx="1.81" ry="2.58" fill="#7a6a54" /><ellipse cx="73.92" cy="46.28" rx="1.03" ry="1.23" fill="#b89068" /><ellipse cx="76.84" cy="49.17" rx="1.81" ry="2.58" fill="#7a3420" /><ellipse cx="76.84" cy="46.59" rx="1.03" ry="1.23" fill="#987048" /><ellipse cx="76.84" cy="45.87" rx="1.10" ry="0.71" fill="#d8d0c0" /><ellipse cx="78.72" cy="48.74" rx="1.81" ry="2.58" fill="#a07a40" /><ellipse cx="78.72" cy="46.15" rx="1.03" ry="1.23" fill="#987048" /><ellipse cx="81.66" cy="47.67" rx="1.81" ry="2.58" fill="#2a1e14" /><ellipse cx="81.66" cy="45.09" rx="1.03" ry="1.23" fill="#987048" /><ellipse cx="81.66" cy="44.38" rx="1.10" ry="0.71" fill="#bdb2a0" /><ellipse cx="84.19" cy="47.66" rx="1.81" ry="2.58" fill="#5a4a30" /><ellipse cx="84.19" cy="45.08" rx="1.03" ry="1.23" fill="#a07850" /><ellipse cx="86.41" cy="48.14" rx="1.81" ry="2.58" fill="#c8b890" /><ellipse cx="86.41" cy="45.56" rx="1.03" ry="1.23" fill="#c8a880" /><ellipse cx="86.41" cy="44.85" rx="1.10" ry="0.71" fill="#e4dccc" /><ellipse cx="88.49" cy="47.49" rx="1.81" ry="2.58" fill="#a07a40" /><ellipse cx="88.49" cy="44.90" rx="1.03" ry="1.23" fill="#987048" /><ellipse cx="88.49" cy="44.19" rx="1.10" ry="0.71" fill="#bdb2a0" /><ellipse cx="92.06" cy="48.06" rx="1.81" ry="2.58" fill="#8a2a1a" /><ellipse cx="92.06" cy="45.48" rx="1.03" ry="1.23" fill="#987048" /><ellipse cx="92.06" cy="44.77" rx="1.10" ry="0.71" fill="#d8d0c0" /><ellipse cx="94.16" cy="48.32" rx="1.81" ry="2.58" fill="#2e3a26" /><ellipse cx="94.16" cy="45.73" rx="1.03" ry="1.23" fill="#c09a72" /><ellipse cx="97.40" cy="47.47" rx="1.81" ry="2.58" fill="#2a1e14" /><ellipse cx="97.40" cy="44.89" rx="1.03" ry="1.23" fill="#c8a880" /><ellipse cx="100.52" cy="47.49" rx="1.81" ry="2.58" fill="#5a4a30" /><ellipse cx="100.52" cy="44.91" rx="1.03" ry="1.23" fill="#a07850" /><ellipse cx="103.21" cy="48.36" rx="1.81" ry="2.58" fill="#2e3a26" /><ellipse cx="103.21" cy="45.78" rx="1.03" ry="1.23" fill="#c09a72" /><ellipse cx="105.94" cy="48.88" rx="1.81" ry="2.58" fill="#a83a22" /><ellipse cx="105.94" cy="46.29" rx="1.03" ry="1.23" fill="#b89068" /><ellipse cx="105.94" cy="45.58" rx="1.10" ry="0.71" fill="#d8d0c0" /><ellipse cx="108.42" cy="48.53" rx="1.81" ry="2.58" fill="#7a6a54" /><ellipse cx="108.42" cy="45.95" rx="1.03" ry="1.23" fill="#a07850" /><ellipse cx="111.77" cy="47.04" rx="1.81" ry="2.58" fill="#2a1e14" /><ellipse cx="111.77" cy="44.46" rx="1.03" ry="1.23" fill="#c8a880" /><ellipse cx="115.16" cy="48.12" rx="1.81" ry="2.58" fill="#9a9080" /><ellipse cx="115.16" cy="45.54" rx="1.03" ry="1.23" fill="#c8a880" /><ellipse cx="115.16" cy="44.82" rx="1.10" ry="0.71" fill="#bdb2a0" /><polygon points="1.96,49.18 9.92,46.20 14.89,55.14 11.90,69.06 3.95,67.07" fill="#9a2a1c" /><polygon points="3.95,55.14 11.90,53.15 17.87,67.07 7.93,70.05" fill="#b89040" /><rect x="9.92" y="61.11" width="1.99" height="9.94" fill="#d8c8a0" /><rect x="17.47" y="59.12" width="1.99" height="11.93" fill="#e0d4b8" /><polygon points="15.88,49.18 23.83,47.59 25.82,61.11 17.87,64.09" fill="#5a4030" /><ellipse cx="20.85" cy="47.59" rx="1.99" ry="2.39" fill="#e0c8a0" /><polygon points="23.83,51.17 30.79,49.18 32.78,59.12 25.82,61.11" fill="#d4a060" /><polygon points="27.81,47.59 36.76,46.20 40.73,57.13 31.79,62.10 28.80,59.12" fill="#c23a22" /><rect x="31.39" y="59.12" width="1.99" height="8.95" fill="#eee6d6" /><rect x="34.77" y="58.12" width="1.99" height="8.95" fill="#e6ddca" /><ellipse cx="34.17" cy="44.80" rx="1.79" ry="2.19" fill="#e8d0a8" /><rect x="36.76" y="53.15" width="15.31" height="12.92" fill="#1a1612" /><rect x="36.16" y="52.16" width="16.50" height="2.19" fill="#2e261c" /><rect x="43.71" y="47.19" width="6.96" height="5.96" fill="#7a6448" /><polygon points="52.66,48.78 59.62,47.59 61.61,61.11 53.65,62.10" fill="#6a5a48" /><rect x="55.64" y="58.12" width="1.99" height="5.96" fill="#e0d8c6" /><rect x="59.22" y="57.53" width="1.59" height="5.96" fill="#d8d0bc" /><polygon points="61.61,46.79 68.56,45.60 69.96,59.12 62.60,60.11" fill="#8a7a60" /><polygon points="71.55,47.19 77.51,46.20 79.50,55.14 72.54,56.14" fill="#2e5a32" /><polygon points="74.53,53.15 83.48,52.16 86.46,63.09 73.53,64.09" fill="#e6dcc0" /><polygon points="80.49,50.17 89.44,48.78 91.43,66.08 79.50,67.07" fill="#eae6da" /><polygon points="83.48,53.15 88.45,52.16 89.44,64.09 82.48,65.08" fill="#f6f2ea" /><polygon points="89.44,49.18 99.38,47.59 100.37,61.11 91.43,64.09" fill="#c24a26" /><rect x="93.42" y="61.11" width="2.39" height="8.95" fill="#e8e0d0" /><ellipse cx="94.61" cy="70.65" rx="1.79" ry="0.80" fill="#1e1812" /><polygon points="99.38,47.59 106.34,46.79 107.33,63.09 99.78,64.09" fill="#8e9eac" /><ellipse cx="102.96" cy="45.20" rx="1.79" ry="2.19" fill="#e0c8a0" /><polygon points="106.34,45.20 116.08,43.21 116.08,73.03 107.33,71.05" fill="#2a1c12" /><polygon points="108.33,49.18 113.30,48.18 114.29,61.11 109.32,62.10" fill="#6a5a4a" /><polygon points="-0.02,69.06 23.83,67.07 116.08,67.47 116.08,75.82 -0.02,75.82" fill="#5e3a1e" /><ellipse cx="107.74" cy="71.95" rx="1.25" ry="0.43" fill="#8a5a30" /><ellipse cx="25.96" cy="69.18" rx="1.95" ry="0.33" fill="#9a6a3a" /><ellipse cx="9.85" cy="73.78" rx="0.60" ry="0.34" fill="#8a5a30" /><ellipse cx="74.92" cy="70.30" rx="0.77" ry="0.37" fill="#9a6a3a" /><ellipse cx="81.08" cy="68.89" rx="0.69" ry="0.45" fill="#5a3418" /><ellipse cx="45.03" cy="69.71" rx="1.43" ry="0.30" fill="#7a4a28" /><ellipse cx="115.66" cy="70.11" rx="1.04" ry="0.55" fill="#5a3418" /><ellipse cx="55.16" cy="69.79" rx="0.94" ry="0.58" fill="#7a4a28" /><ellipse cx="6.40" cy="69.49" rx="1.83" ry="0.49" fill="#8a5a30" /><ellipse cx="29.84" cy="72.97" rx="1.88" ry="0.37" fill="#8a5a30" /><ellipse cx="80.76" cy="73.35" rx="1.10" ry="0.42" fill="#8a5a30" /><ellipse cx="92.52" cy="73.50" rx="1.30" ry="0.36" fill="#5a3418" /><ellipse cx="36.17" cy="74.10" rx="0.92" ry="0.36" fill="#7a4a28" /><ellipse cx="12.63" cy="72.65" rx="1.45" ry="0.57" fill="#9a6a3a" /><ellipse cx="48.39" cy="72.96" rx="1.92" ry="0.34" fill="#9a6a3a" /><ellipse cx="6.29" cy="68.24" rx="1.43" ry="0.42" fill="#8a5a30" /><ellipse cx="21.35" cy="71.37" rx="1.59" ry="0.39" fill="#8a5a30" /><ellipse cx="115.79" cy="74.92" rx="1.05" ry="0.35" fill="#9a6a3a" /><ellipse cx="3.68" cy="72.95" rx="1.12" ry="0.41" fill="#7a4a28" /><ellipse cx="51.34" cy="68.87" rx="0.71" ry="0.32" fill="#9a6a3a" /><ellipse cx="110.91" cy="68.97" rx="1.94" ry="0.36" fill="#7a4a28" /><ellipse cx="89.23" cy="70.34" rx="1.72" ry="0.32" fill="#9a6a3a" /><ellipse cx="22.70" cy="72.05" rx="1.22" ry="0.39" fill="#9a6a3a" /><ellipse cx="3.49" cy="71.09" rx="1.73" ry="0.53" fill="#8a5a30" /><ellipse cx="43.58" cy="71.48" rx="1.71" ry="0.32" fill="#5a3418" /><ellipse cx="86.74" cy="74.67" rx="1.07" ry="0.38" fill="#8a5a30" /><ellipse cx="30.42" cy="73.34" rx="1.04" ry="0.38" fill="#8a5a30" /><ellipse cx="83.75" cy="72.45" rx="1.72" ry="0.58" fill="#8a5a30" /><ellipse cx="2.79" cy="69.78" rx="1.26" ry="0.58" fill="#9a6a3a" /><ellipse cx="91.67" cy="74.78" rx="1.73" ry="0.34" fill="#9a6a3a" /><ellipse cx="21.22" cy="73.97" rx="1.62" ry="0.54" fill="#5a3418" /><ellipse cx="70.48" cy="70.48" rx="1.04" ry="0.41" fill="#8a5a30" /><ellipse cx="59.41" cy="70.95" rx="0.82" ry="0.42" fill="#8a5a30" /><ellipse cx="55.90" cy="72.07" rx="0.82" ry="0.43" fill="#8a5a30" /><ellipse cx="114.67" cy="70.01" rx="0.71" ry="0.33" fill="#9a6a3a" /><ellipse cx="114.74" cy="75.22" rx="0.84" ry="0.34" fill="#9a6a3a" /><ellipse cx="72.00" cy="73.02" rx="1.64" ry="0.55" fill="#8a5a30" /><ellipse cx="90.51" cy="70.23" rx="0.99" ry="0.38" fill="#7a4a28" /><ellipse cx="85.67" cy="69.53" rx="0.94" ry="0.37" fill="#5a3418" /><ellipse cx="32.64" cy="74.74" rx="0.86" ry="0.32" fill="#7a4a28" /><ellipse cx="115.20" cy="71.80" rx="0.92" ry="0.54" fill="#9a6a3a" /><ellipse cx="115.03" cy="68.82" rx="1.26" ry="0.54" fill="#9a6a3a" /><ellipse cx="106.14" cy="68.36" rx="1.01" ry="0.33" fill="#5a3418" /><ellipse cx="69.70" cy="74.15" rx="0.87" ry="0.32" fill="#5a3418" /><ellipse cx="52.12" cy="69.98" rx="1.68" ry="0.58" fill="#8a5a30" /><ellipse cx="73.99" cy="73.29" rx="1.08" ry="0.31" fill="#7a4a28" /><ellipse cx="16.39" cy="69.57" rx="0.95" ry="0.48" fill="#5a3418" /><ellipse cx="94.57" cy="74.09" rx="1.17" ry="0.41" fill="#7a4a28" /><ellipse cx="9.02" cy="68.30" rx="1.29" ry="0.44" fill="#9a6a3a" /><ellipse cx="11.75" cy="70.97" rx="1.36" ry="0.49" fill="#8a5a30" /><ellipse cx="75.80" cy="70.99" rx="0.97" ry="0.59" fill="#7a4a28" /><ellipse cx="48.49" cy="68.44" rx="1.63" ry="0.56" fill="#9a6a3a" /><ellipse cx="48.33" cy="74.42" rx="1.98" ry="0.41" fill="#5a3418" /><ellipse cx="45.34" cy="71.04" rx="1.91" ry="0.43" fill="#5a3418" /><ellipse cx="49.18" cy="74.10" rx="1.16" ry="0.56" fill="#9a6a3a" /><ellipse cx="89.73" cy="69.02" rx="0.67" ry="0.34" fill="#9a6a3a" /><ellipse cx="10.31" cy="72.64" rx="1.11" ry="0.45" fill="#5a3418" /><ellipse cx="40.37" cy="69.25" rx="0.84" ry="0.32" fill="#9a6a3a" /><ellipse cx="56.93" cy="73.98" rx="1.94" ry="0.36" fill="#5a3418" /><ellipse cx="97.19" cy="68.38" rx="1.87" ry="0.39" fill="#9a6a3a" /><ellipse cx="19.86" cy="72.04" rx="2.78" ry="0.99" fill="#2a1a10" /><ellipse cx="55.64" cy="69.06" rx="5.96" ry="1.19" fill="#5a3a20" /></g></g></svg>
<div class="t" id="c1" style="left:455.96px;top:305.83px;font-size:6.700px;color:#383838;font-weight:normal;letter-spacing:0.039px;">Reading of <a>Voltaire</a>'s tragedy, <a><i>The</i></a></div>
<div class="t" id="c2" style="left:455.96px;top:315.73px;font-size:6.700px;color:#383838;font-weight:normal;letter-spacing:-0.036px;"><a><i>Orphan of China</i></a>, in the salon of <a>Marie</a></div>
<div class="t" id="c3" style="left:455.96px;top:325.63px;font-size:6.700px;color:#383838;font-weight:normal;letter-spacing:-0.082px;"><a>Thérèse Rodet Geoffrin</a> in 1755, by</div>
<div class="t" id="c4" style="left:455.96px;top:335.63px;font-size:6.700px;color:#383838;font-weight:normal;letter-spacing:0.041px;"><a>Anicet Charles Gabriel Lemonnier</a>,</div>
<div class="t" id="c5" style="left:455.96px;top:343.53px;font-size:6.700px;color:#383838;font-weight:normal;letter-spacing:-0.12px;"><span style="border-bottom:0.8px solid #555">c.</span> 1812<sup>[note 1]</sup></div>
<div class="r" style="left:345px;top:29px;width:14px;height:359px;background:linear-gradient(to right, rgba(0,0,0,0.07), rgba(0,0,0,0.035) 30%, rgba(0,0,0,0));"></div>
<div class="r" style="left:176px;top:29px;width:169px;height:359px;background:#fafafa;box-shadow:0 0 1.5px rgba(0,0,0,0.05);"></div>
<div class="r" style="left:152px;top:29px;width:23px;height:359px;background:#ebebeb;"></div>
<div class="r" style="left:175px;top:29px;width:1.2px;height:359px;background:#e0e0e0;"></div>
<div class="r" style="left:176.2px;top:29px;width:1.6px;height:359px;background:#ffffff;"></div>
<div class="t" id="st" style="left:184.00px;top:37.94px;font-size:7.400px;color:#1a1a1a;font-weight:bold;letter-spacing:0.026px;">Age of Enlightenment</div>
<div class="t" id="s0" style="left:184.94px;top:60.60px;font-size:7.850px;color:#1e1e1e;font-weight:normal;letter-spacing:0.082px;">Important intellectuals</div>
<div class="t" id="s1" style="left:185.94px;top:77.42px;font-size:7.850px;color:#1e1e1e;font-weight:normal;letter-spacing:-0.06px;">Topics</div>
<div class="t" id="s2" style="left:192.89px;top:92.17px;font-size:6.300px;color:#1e1e1e;font-weight:normal;letter-spacing:-0.012px;">Philosophy</div>
<div class="t" id="s3" style="left:192.89px;top:107.99px;font-size:6.300px;color:#1e1e1e;font-weight:normal;letter-spacing:-0.132px;">Science</div>
<div class="t" id="s4" style="left:192.89px;top:123.81px;font-size:6.300px;color:#1e1e1e;font-weight:normal;letter-spacing:-0.037px;">Sociology, economics, and law</div>
<div class="t" id="s5" style="left:192.89px;top:139.63px;font-size:6.300px;color:#1e1e1e;font-weight:normal;letter-spacing:0.025px;">Politics</div>
<div class="t" id="s6" style="left:200.96px;top:156.45px;font-size:6.300px;color:#1e1e1e;font-weight:normal;letter-spacing:0.021px;">Theories of government</div>
<div class="t" id="s7" style="left:200.96px;top:172.27px;font-size:6.300px;color:#1e1e1e;font-weight:normal;letter-spacing:0.052px;">Enlightened absolutism</div>
<div class="t" id="s8" style="left:200.96px;top:187.09px;font-size:6.300px;color:#1e1e1e;font-weight:normal;letter-spacing:-0.022px;">American Revolution and French Revolution</div>
<div class="t" id="s9" style="left:192.89px;top:202.91px;font-size:6.300px;color:#1e1e1e;font-weight:normal;letter-spacing:0.071px;">Religion</div>
<div class="t" id="s10" style="left:200.96px;top:218.73px;font-size:6.300px;color:#1e1e1e;font-weight:normal;letter-spacing:-0.048px;">Separation of church and state</div>
<div class="t" id="s11" style="left:185.00px;top:234.62px;font-size:7.850px;color:#1e1e1e;font-weight:normal;letter-spacing:0.022px;">National variations</div>
<div class="t" id="s12" style="left:192.89px;top:251.37px;font-size:6.300px;color:#1e1e1e;font-weight:normal;letter-spacing:0.099px;">Great Britain</div>
<div class="t" id="s13" style="left:200.96px;top:267.19px;font-size:6.300px;color:#1e1e1e;font-weight:normal;letter-spacing:0.051px;">England</div>
<div class="t" id="s14" style="left:200.96px;top:282.01px;font-size:6.300px;color:#1e1e1e;font-weight:normal;letter-spacing:0.0px;">Scotland</div>
<div class="t" id="s15" style="left:200.96px;top:297.83px;font-size:6.300px;color:#1e1e1e;font-weight:normal;letter-spacing:0.036px;">Anglo-American colonies</div>
<div class="t" id="s16" style="left:192.89px;top:313.65px;font-size:6.300px;color:#1e1e1e;font-weight:normal;letter-spacing:-0.048px;">German states</div>
<div class="t" id="s17" style="left:192.89px;top:330.47px;font-size:6.300px;color:#1e1e1e;font-weight:normal;letter-spacing:-0.036px;">Habsburg monarchy</div>
<div class="t" id="s18" style="left:192.89px;top:346.29px;font-size:6.300px;color:#1e1e1e;font-weight:normal;letter-spacing:0.075px;">Italy</div>
<div class="t" id="s19" style="left:192.89px;top:361.11px;font-size:6.300px;color:#1e1e1e;font-weight:normal;letter-spacing:-0.078px;">Bourbon Spain and Spanish America</div>
<div class="t" id="s20" style="left:192.89px;top:376.93px;font-size:6.300px;color:#1e1e1e;font-weight:normal;letter-spacing:0.05px;">Haiti</div>
<svg class="r" style="left:160px;top:37px" width="9" height="8" viewBox="0 0 9 8"><path d="M0.5 1.3H8.3M0.5 4H8.3M0.5 6.7H8.3" stroke="#1e1e1e" stroke-width="1.15"/></svg>
<svg class="r" style="left:159px;top:77px" width="10" height="10" viewBox="0 0 10 10"><circle cx="4.3" cy="4.3" r="3" fill="none" stroke="#1e1e1e" stroke-width="1.2"/><path d="M6.5 6.5L8.8 8.8" stroke="#1e1e1e" stroke-width="1.3" stroke-linecap="round"/></svg>
<div class="r" style="left:155.2px;top:94.3px;width:18px;height:18px;background:#dadada;border-radius:4px;"></div>
<svg class="r" style="left:160px;top:99px" width="9" height="9" viewBox="0 0 9 9"><circle cx="1.5" cy="1.9" r="0.95" fill="#1e1e1e"/><circle cx="1.5" cy="4.5" r="0.95" fill="#1e1e1e"/><circle cx="1.5" cy="7.1" r="0.95" fill="#1e1e1e"/><path d="M4 1.9H8.1M4 4.5H8.1M4 7.1H8.1" stroke="#1e1e1e" stroke-width="1.1"/></svg>
<svg class="r" style="left:160px;top:119.5px" width="9" height="9" viewBox="0 0 9 9"><path d="M0.8 2.9H4M2.7 1.3V4.6C2.7 5.6 2.2 6.3 1.3 6.6" stroke="#1e1e1e" stroke-width="1.15" fill="none" stroke-linecap="round"/><path d="M3.9 8.1L5.9 2L7.9 8.1M4.7 6H7.1" stroke="#1e1e1e" stroke-width="1.25" fill="none" stroke-linejoin="round"/></svg>
<svg class="r" style="left:160px;top:140.5px" width="8" height="10" viewBox="0 0 8 10"><path d="M1.6 1.3H6.4Q6.9 1.3 6.9 1.8V8.4L4.2 7.3L1.1 8.4V1.8Q1.1 1.3 1.6 1.3Z" fill="none" stroke="#1e1e1e" stroke-width="1.2" stroke-linejoin="round"/></svg>
<svg class="r" style="left:159.5px;top:162px" width="10" height="10" viewBox="0 0 10 10"><circle cx="5.05" cy="4.6" r="3.6" fill="none" stroke="#1e1e1e" stroke-width="1.15"/><path d="M3.9 4.2L5.05 5.2L6.2 4.2" fill="none" stroke="#1e1e1e" stroke-width="0.9" stroke-linecap="round"/></svg>
<svg class="r" style="left:160px;top:371.5px" width="9" height="8" viewBox="0 0 9 8"><rect x="1" y="1.3" width="2.2" height="5.4" fill="#a8a8a8"/><rect x="3.9" y="1.3" width="3.6" height="5.4" fill="#ffffff"/><path d="M3.5 1V7" stroke="#1e1e1e" stroke-width="0.9"/><rect x="0.65" y="0.95" width="7.8" height="6.1" rx="1.1" fill="none" stroke="#1e1e1e" stroke-width="1.1"/></svg>
</div></div>
<div class="edge"></div>
<div style="position:absolute;left:362px;top:385.8px;width:12px;height:2.2px;overflow:hidden"><div style="position:absolute;left:0.6px;top:0px;font-family:'Liberation Sans',sans-serif;font-size:6.5px;line-height:1;color:#2d5dbd;white-space:nowrap">[10]</div></div>
</body></html>
